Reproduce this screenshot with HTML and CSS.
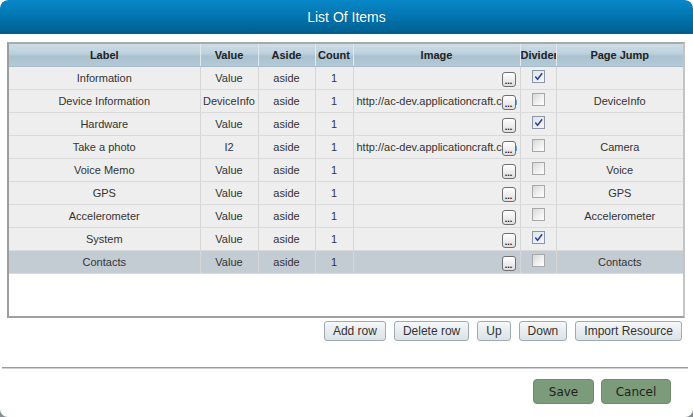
FILE: index.html
```html
<!DOCTYPE html>
<html>
<head>
<meta charset="utf-8">
<link rel="stylesheet" href="styles.css">
</head>
<body>
<div class="dialog">
  <div class="titlebar">List Of Items</div>
  <div class="grid">
    <table>
      <colgroup>
        <col class="c-label"><col class="c-value"><col class="c-aside"><col class="c-count"><col class="c-image"><col class="c-divider"><col class="c-jump">
      </colgroup>
      <thead>
        <tr><th>Label</th><th>Value</th><th>Aside</th><th>Count</th><th>Image</th><th>Divider</th><th>Page Jump</th></tr>
      </thead>
      <tbody>
        <tr><td>Information</td><td>Value</td><td>aside</td><td>1</td><td class="img"><span class="dots">...</span></td><td class="div"><span class="cb on"><svg viewBox="0 0 12 12"><polyline points="2.5,6 5,9 10,2.5"/></svg></span></td><td></td></tr>
        <tr><td>Device Information</td><td>DeviceInfo</td><td>aside</td><td>1</td><td class="img">http://ac-dev.applicationcraft.com<span class="dots">...</span></td><td class="div"><span class="cb"></span></td><td>DeviceInfo</td></tr>
        <tr><td>Hardware</td><td>Value</td><td>aside</td><td>1</td><td class="img"><span class="dots">...</span></td><td class="div"><span class="cb on"><svg viewBox="0 0 12 12"><polyline points="2.5,6 5,9 10,2.5"/></svg></span></td><td></td></tr>
        <tr><td>Take a photo</td><td>I2</td><td>aside</td><td>1</td><td class="img">http://ac-dev.applicationcraft.com<span class="dots">...</span></td><td class="div"><span class="cb"></span></td><td>Camera</td></tr>
        <tr><td>Voice Memo</td><td>Value</td><td>aside</td><td>1</td><td class="img"><span class="dots">...</span></td><td class="div"><span class="cb"></span></td><td>Voice</td></tr>
        <tr><td>GPS</td><td>Value</td><td>aside</td><td>1</td><td class="img"><span class="dots">...</span></td><td class="div"><span class="cb"></span></td><td>GPS</td></tr>
        <tr><td>Accelerometer</td><td>Value</td><td>aside</td><td>1</td><td class="img"><span class="dots">...</span></td><td class="div"><span class="cb"></span></td><td>Accelerometer</td></tr>
        <tr><td>System</td><td>Value</td><td>aside</td><td>1</td><td class="img"><span class="dots">...</span></td><td class="div"><span class="cb on"><svg viewBox="0 0 12 12"><polyline points="2.5,6 5,9 10,2.5"/></svg></span></td><td></td></tr>
        <tr class="sel"><td>Contacts</td><td>Value</td><td>aside</td><td>1</td><td class="img"><span class="dots">...</span></td><td class="div"><span class="cb"></span></td><td>Contacts</td></tr>
      </tbody>
    </table>
  </div>
  <div class="toolbar">
    <button class="tbtn">Add row</button>
    <button class="tbtn">Delete row</button>
    <button class="tbtn">Up</button>
    <button class="tbtn">Down</button>
    <button class="tbtn">Import Resource</button>
  </div>
  <div class="separator"></div>
  <div class="footer">
    <button class="fbtn save">Save</button>
    <button class="fbtn cancel">Cancel</button>
  </div>
</div>
</body>
</html>
```
FILE: styles.css
```css
html, body {
  margin: 0;
  padding: 0;
}
body {
  width: 693px;
  height: 417px;
  overflow: hidden;
  background: linear-gradient(to bottom, #ffffff 0, #ffffff 380px, #7f9098 380px);
  font-family: "Liberation Sans", Arial, sans-serif;
}
.dialog {
  width: 693px;
  height: 417px;
  background: #fff;
  border-radius: 8px;
  overflow: hidden;
  display: flex;
  flex-direction: column;
}
.titlebar {
  height: 34px;
  line-height: 34px;
  text-align: center;
  color: #fff;
  font-size: 14px;
  text-shadow: 0 0 1px rgba(0, 0, 0, 0.35);
  background: linear-gradient(to bottom, #0887c8 0%, #0276b2 45%, #01679b 80%, #005d8c 100%);
  border-radius: 8px 8px 0 0;
}
.grid {
  margin: 8px 0 0 7px;
  width: 678px;
  height: 276px;
  box-sizing: border-box;
  border: 2px solid #a9a9a9;
  border-left-color: #9c9c9c;
  border-right-color: #c4c4c4;
  border-bottom-color: #a0a0a0;
  background: #fff;
  overflow: hidden;
}
table {
  table-layout: fixed;
  border-collapse: collapse;
  width: 674px;
  font-size: 11px;
  color: #333;
}
.c-label { width: 191px; }
.c-value { width: 58px; }
.c-aside { width: 57px; }
.c-count { width: 38px; }
.c-image { width: 167px; }
.c-divider { width: 36px; }
.c-jump { width: 127px; }
th {
  height: 22px;
  padding: 0;
  font-weight: bold;
  color: #222;
  text-align: center;
  white-space: nowrap;
  overflow: hidden;
  background: linear-gradient(to bottom, #cddde6 0%, #bcd0dc 45%, #a9c1d0 55%, #b4c9d6 100%);
  border-right: 1px solid #e2eaef;
  border-bottom: 1px solid #a7bccb;
  box-sizing: border-box;
}
td {
  height: 23px;
  box-sizing: border-box;
  padding: 0;
  text-align: center;
  white-space: nowrap;
  overflow: hidden;
  background: #eeeeee;
  border-right: 1px solid #d6d6d6;
  border-bottom: 1px solid #dadada;
}
th:last-child, td:last-child {
  border-right: none;
}
tr.sel td {
  background: #c4ccd3;
}
td.img {
  position: relative;
  text-align: left;
  padding-left: 3px;
  text-overflow: clip;
}
.dots {
  position: absolute;
  right: 4px;
  top: 5px;
  width: 12px;
  height: 13px;
  border: 1px solid #6f6f6f;
  border-radius: 3px;
  background: linear-gradient(to bottom, #ffffff, #dedede);
  font-size: 9px;
  font-weight: bold;
  line-height: 16px;
  letter-spacing: 0;
  text-align: center;
  color: #111;
  overflow: hidden;
}
td.div {
  vertical-align: top;
  padding-top: 3px;
  padding-left: 11px;
  text-align: left;
}
.cb {
  display: block;
  width: 11px;
  height: 11px;
  border: 1px solid #a8a8a8;
  background: linear-gradient(135deg, #d8d8d8 0%, #f2f2f2 60%, #ffffff 100%);
}
.cb.on {
  border-color: #8a97a6;
  background: linear-gradient(135deg, #dfe5ea 0%, #f5f7f9 100%);
}
.cb svg {
  display: block;
  width: 11px;
  height: 11px;
}
.cb polyline {
  fill: none;
  stroke: #2d3e9c;
  stroke-width: 1.6;
}
.toolbar {
  display: flex;
  justify-content: flex-end;
  gap: 8px;
  margin-top: 3px;
  padding-right: 11px;
}
.tbtn {
  height: 20px;
  padding: 0 8px;
  margin: 0;
  font-family: "Liberation Sans", Arial, sans-serif;
  font-size: 12px;
  color: #333;
  border: 1px solid #9fabb3;
  border-radius: 3px;
  background: linear-gradient(to bottom, #f6f8f9 0%, #e8ecef 50%, #dce2e6 100%);
}
.separator {
  margin: 26px 5px 0 2px;
  height: 0;
  border-top: 1px solid #9a9a9a;
  border-bottom: 1px solid #d0d0d0;
}
.footer {
  display: flex;
  justify-content: flex-end;
  gap: 7px;
  padding: 10px 22px 0 0;
}
.fbtn {
  height: 25px;
  margin: 0;
  padding: 0;
  font-family: "DejaVu Sans", Verdana, sans-serif;
  font-size: 12px;
  color: #1e1e1e;
  background: #7c9b7a;
  border: 1px solid #6e8c6c;
  border-radius: 4px;
}
.save { width: 61px; }
.cancel { width: 70px; }
```
